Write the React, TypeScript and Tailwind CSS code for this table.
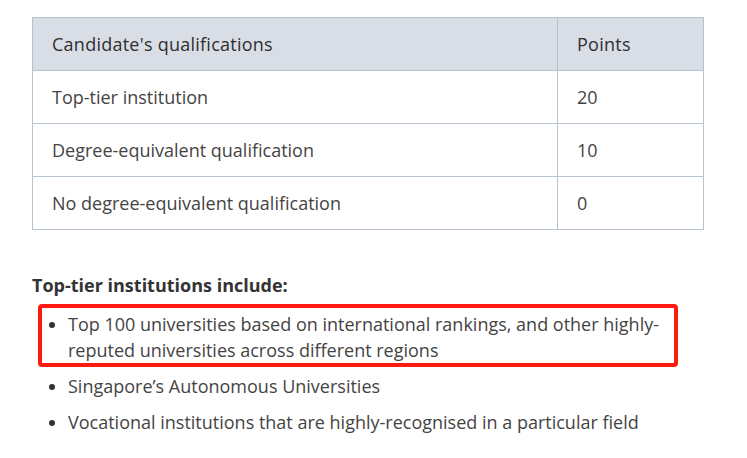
export default function App() {
  const rows = [
    ["Top-tier institution", "20"],
    ["Degree-equivalent qualification", "10"],
    ["No degree-equivalent qualification", "0"],
  ];
  return (
    <div
      className="w-[747px] h-[458px] bg-white text-[#444] text-[18px] overflow-hidden"
      style={{ fontFamily: '"Open Sans", "Noto Sans", sans-serif' }}
    >
      <div className="pl-[32px] pt-[17px] w-[704px]">
        <table className="w-full border-collapse">
          <thead>
            <tr className="bg-[#d9dde6] h-[53px] text-[#2f2f2f]">
              <th className="border border-[#b7c3cf] text-left font-normal pl-[19px] w-[525px] tracking-[0.25px]">
                Candidate's qualifications
              </th>
              <th className="border border-[#b7c3cf] text-left font-normal pl-[19px] tracking-[0.25px]">Points</th>
            </tr>
          </thead>
          <tbody>
            {rows.map(([q, p]) => (
              <tr key={q} className="h-[53px]">
                <td className="border border-[#b7c3cf] pl-[19px]">{q}</td>
                <td className="border border-[#b7c3cf] pl-[19px]">{p}</td>
              </tr>
            ))}
          </tbody>
        </table>

        <p className="mt-[42px] font-bold leading-[26px] text-[#333]">Top-tier institutions include:</p>

        <ul className="mt-[13px] list-disc pl-[36px] leading-[26px] marker:text-[#333]">
          <li className="relative">
            <div className="absolute left-[-30px] right-[26px] top-[-7px] bottom-[-4px] border-[4px] border-[#ff1a10] rounded-[4px]" />
            Top 100 universities based on international rankings, and other highly-reputed universities across different regions
          </li>
          <li className="mt-[10px]">Singapore’s Autonomous Universities</li>
          <li className="mt-[10px]">Vocational institutions that are highly-recognised in a particular field</li>
        </ul>
      </div>
    </div>
  );
}
